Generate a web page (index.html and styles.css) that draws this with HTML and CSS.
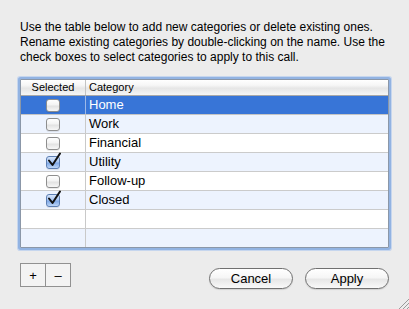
FILE: index.html
```html
<!DOCTYPE html>
<html>
<head>
<meta charset="utf-8">
<link rel="stylesheet" href="styles.css">
</head>
<body>
<div class="win">
  <p class="desc">Use the table below to add new categories or delete existing ones.<br>Rename existing categories by double-clicking on the name. Use the<br>check boxes to select categories to apply to this call.</p>
  <div class="table">
    <div class="row head"><div class="c1">Selected</div><div class="c2">Category</div></div>
    <div class="row sel"><div class="c1"><span class="cb"></span></div><div class="c2">Home</div></div>
    <div class="row alt"><div class="c1"><span class="cb"></span></div><div class="c2">Work</div></div>
    <div class="row"><div class="c1"><span class="cb"></span></div><div class="c2">Financial</div></div>
    <div class="row alt"><div class="c1"><span class="cb on"><svg class="tick" viewBox="0 0 16 16" width="16" height="16"><path d="M3 8.5 L6.5 13 L14 1.5" fill="none" stroke="#111" stroke-width="2" stroke-linecap="round" stroke-linejoin="round"/></svg></span></div><div class="c2">Utility</div></div>
    <div class="row"><div class="c1"><span class="cb"></span></div><div class="c2">Follow-up</div></div>
    <div class="row alt"><div class="c1"><span class="cb on"><svg class="tick" viewBox="0 0 16 16" width="16" height="16"><path d="M3 8.5 L6.5 13 L14 1.5" fill="none" stroke="#111" stroke-width="2" stroke-linecap="round" stroke-linejoin="round"/></svg></span></div><div class="c2">Closed</div></div>
    <div class="row"><div class="c1"></div><div class="c2"></div></div>
    <div class="row alt last"><div class="c1"></div><div class="c2"></div></div>
  </div>
  <div class="footer">
    <div class="pm"><span class="sq">+</span><span class="sq">–</span></div>
    <div class="actions"><span class="pill">Cancel</span><span class="pill">Apply</span></div>
  </div>
  <svg class="grip" width="12" height="12" viewBox="0 0 12 12"><path d="M12 2 L2 12 M12 6 L6 12 M12 10 L10 12" stroke="#9a9a9a" stroke-width="1"/></svg>
</div>
</body>
</html>
```
FILE: styles.css
```css
html, body {
  margin: 0;
  padding: 0;
}
body {
  background: #ececec;
  font-family: "Liberation Sans", Arial, sans-serif;
  color: #000;
  width: 409px;
  height: 309px;
  overflow: hidden;
}
.win {
  position: relative;
  height: 309px;
  box-sizing: border-box;
  padding: 20px 0 0 20px;
}
.desc {
  margin: 0;
  font-size: 12px;
  line-height: 15px;
  white-space: nowrap;
}
.table {
  margin-top: 14px;
  width: 369px;
  box-sizing: border-box;
  border: 1px solid #8b97a8;
  background: #fff;
  box-shadow: 0 0 0 2px #92b3e2, 0 0 0 3px #c6d6ee;
  border-radius: 1px;
}
.row {
  display: grid;
  grid-template-columns: 65px 1fr;
  height: 19px;
  box-sizing: border-box;
  border-bottom: 1px solid #cbcbcb;
  font-size: 13px;
  line-height: 18px;
}
.row.last {
  border-bottom: none;
  height: 18px;
}
.row.alt {
  background: #edf3fe;
}
.row.sel {
  background: #3875d7;
  color: #fff;
  border-bottom-color: #c4c4c4;
}
.row.sel .c1 {
  border-right-color: #9db9e8;
}
.c1 {
  border-right: 1px solid #c9c9c9;
  display: flex;
  align-items: center;
  justify-content: center;
}
.c2 {
  padding-left: 3px;
}
.row.head {
  height: 16px;
  border-bottom: 1px solid #a8a8a8;
  font-size: 11px;
  line-height: 15px;
  background: linear-gradient(#ffffff 0%, #f6f6f6 35%, #e6e6e6 55%, #eeeeee 80%, #f6f6f6 100%);
}
.row.head .c1 {
  border-right-color: #c3c3c3;
}
.cb {
  position: relative;
  width: 14px;
  height: 13px;
  box-sizing: border-box;
  border: 1px solid #8e8e8e;
  border-radius: 3px;
  background: linear-gradient(#ffffff 0%, #f3f3f3 45%, #e2e2e2 55%, #f7f7f7 100%);
  box-shadow: 0 1px 0 rgba(0,0,0,0.08);
}
.cb.on {
  border-color: #5d7fb3;
  background: linear-gradient(#d6e5fb 0%, #a9c6f2 45%, #7fa8e6 55%, #bcd5f7 100%);
}
.tick {
  position: absolute;
  left: -1px;
  top: -5px;
}
.footer {
  display: flex;
  justify-content: space-between;
  align-items: flex-start;
  padding-right: 20px;
  margin-top: 15px;
}
.pm {
  display: flex;
  border: 1px solid #919191;
  background: #f3f3f3;
}
.sq {
  width: 24px;
  height: 22px;
  display: flex;
  align-items: center;
  justify-content: center;
  font-size: 13px;
}
.sq + .sq {
  border-left: 1px solid #919191;
}
.actions {
  display: flex;
  gap: 12px;
  margin-top: 5px;
}
.pill {
  width: 84px;
  height: 21px;
  box-sizing: border-box;
  border: 1px solid #707070;
  border-radius: 11px;
  background: linear-gradient(#ffffff 0%, #f6f6f6 45%, #e7e7e7 55%, #f9f9f9 100%);
  font-size: 13px;
  line-height: 19px;
  text-align: center;
  box-shadow: 0 1px 1px rgba(0,0,0,0.12);
}
.grip {
  position: absolute;
  right: 0;
  bottom: 0;
}
```
